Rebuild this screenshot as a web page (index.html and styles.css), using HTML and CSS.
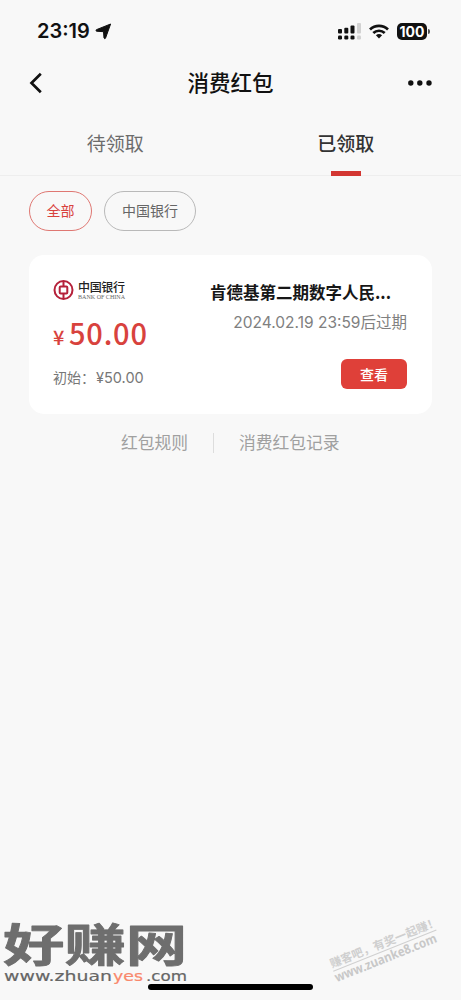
FILE: index.html
```html
<!DOCTYPE html>
<html lang="zh-CN">
<head>
<meta charset="utf-8">
<title>消费红包</title>
<link rel="stylesheet" href="styles.css">
</head>
<body>
<div class="screen">
  <header class="status">
    <span class="time">23:19</span>
    <svg class="location" width="17" height="17" viewBox="0 0 17 17"><path d="M15.600 1 10.500 15.200q-.9 1.100-1.500-.2L8.500 8.700 1.600 8.200Q.3 7.600 1.400 6.700Z" stroke="#111" stroke-linejoin="round"/></svg>
    <svg class="signal" width="24" height="17" viewBox="0 0 24 17">
      <g><rect x="1" y="6" width="4" height="4.500" rx="1"/><rect x="7.300" y="4.700" width="4" height="5.800" rx="1"/><rect x="13.500" y="2.500" width="4" height="8" rx="1"/><rect x="1" y="12.500" width="4" height="4" rx="1.300"/><rect x="7.300" y="12.500" width="4" height="4" rx="1.300"/><rect x="13.500" y="12.500" width="4" height="4" rx="1.300"/></g>
      <g class="faint"><rect x="20" y="0" width="4" height="10.500" rx="1"/><rect x="20" y="12.500" width="4" height="4" rx="1.300"/></g>
    </svg>
    <svg class="wifi" width="20" height="15" viewBox="0 0 20 15"><g fill="none" stroke="#111" stroke-width="2.700"><path d="M1 5.500a13 13 0 0 1 18 0"/><path d="M4.300 9a8.300 8.300 0 0 1 11.400 0"/></g><path d="M6.900 11.300a4.600 4.600 0 0 1 6.200 0L10 14.600Z"/></svg>
    <span class="battery">100</span><span class="battery-tip"></span>
  </header>
  <nav class="nav">
    <svg width="14" height="22" viewBox="0 0 14 22"><path d="M11.800 1.800 2.500 11l9.300 9.200" fill="none" stroke="#111" stroke-width="2.700"/></svg>
    <h1>消费红包</h1>
    <svg width="24" height="6" viewBox="0 0 24 6"><circle cx="2.800" cy="3" r="2.700"/><circle cx="11.800" cy="3" r="2.700"/><circle cx="21" cy="3" r="2.700"/></svg>
  </nav>
  <div class="tabs">
    <div class="tab">待领取</div>
    <div class="tab active">已领取</div>
  </div>
  <div class="chips">
    <span class="chip selected">全部</span>
    <span class="chip bank">中国银行</span>
  </div>
  <main class="card">
    <section class="value">
      <svg class="logo" width="74" height="22" viewBox="0 0 74 22">
        <g fill="none" stroke="#b5213a" stroke-width="2"><circle cx="10.500" cy="11" r="9"/><rect x="6.700" y="7.500" width="7.600" height="7" rx="1"/><path d="M10.500 2v5.500M10.500 14.500V20"/></g>
        <text class="brush" x="25" y="13" textLength="47">中国银行</text>
        <text class="english" x="25" y="20" textLength="47" lengthAdjust="spacingAndGlyphs">BANK OF CHINA</text>
      </svg>
      <div class="amount"><span class="yen">¥</span><span>50.00</span></div>
      <div class="initial"><span>初始：</span><span class="initial-num">¥50.00</span></div>
    </section>
    <section class="detail">
      <h2>肯德基第二期数字人民...</h2>
      <p class="expiry"><span>2024.02.19 23:59</span>后过期</p>
      <button class="view">查看</button>
    </section>
  </main>
  <footer class="links"><span>红包规则</span><i></i><span>消费红包记录</span></footer>
  <svg class="site-mark" width="192" height="82" viewBox="0 0 192 82">
    <text class="site-name" transform="translate(3 58) scale(1.330 1)" x="0" y="0" textLength="138.500" lengthAdjust="spacingAndGlyphs">好赚网</text>
    <g class="site-url">
      <text x="4" y="77" textLength="108" lengthAdjust="spacingAndGlyphs">www.zhuan</text>
      <text class="orange" x="113" y="77" textLength="30" lengthAdjust="spacingAndGlyphs">yes</text>
      <text x="146" y="77" textLength="41" lengthAdjust="spacingAndGlyphs">.com</text>
    </g>
  </svg>
  <svg class="corner-mark" width="131" height="90" viewBox="0 0 131 90">
    <g transform="translate(4 62) rotate(-21.800)">
      <text class="slogan" x="0" y="0" textLength="116">赚客吧，有奖一起赚！</text>
      <path d="M0 3.500H111" stroke="#d0d0d0"/>
      <text class="corner-url" x="-1" y="15" textLength="109" lengthAdjust="spacingAndGlyphs">www.zuanke8.com</text>
    </g>
  </svg>
  <div class="home"></div>
</div>
</body>
</html>
```
FILE: styles.css
```css
* { box-sizing: border-box; }
body { margin: 0; background: #f8f8f8; font-family: Inter, "Noto Sans CJK SC", sans-serif; }
.screen { position: relative; width: 461px; height: 1000px; overflow: hidden; background: #f8f8f8; }
svg { display: block; flex: none; fill: #111; }
.status { display: flex; align-items: center; height: 62px; padding: 0 31px 0 37px; }
.time { width: 54px; font-size: 20px; font-weight: 600; color: #111; white-space: nowrap; }
.location { margin-left: 4px; }
.signal { margin-left: 225px; }
.signal .faint { fill: #d2d2d2; }
.wifi { margin-left: 8px; }
.battery { flex: none; width: 30px; height: 17px; margin-left: 8px; border-radius: 5px; background: #111; color: #fff; font-size: 14px; font-weight: 700; line-height: 17px; text-align: center; }
.battery-tip { flex: none; width: 2px; height: 5px; margin-left: 1px; border-radius: 0 2px 2px 0; background: #555; }
.nav { display: flex; align-items: center; justify-content: space-between; height: 42px; padding: 0 29px; }
.nav h1 { margin: 0 0 0 10px; font-size: 21.5px; line-height: 42px; font-weight: 500; color: #111; }
.tabs { display: flex; height: 72px; border-bottom: 1px solid #eee; }
.tab { position: relative; flex: 1; font-size: 19px; line-height: 82px; text-align: center; color: #6c6c6c; }
.tab.active { color: #333; font-weight: 500; }
.tab.active::after { content: ""; position: absolute; left: 100px; bottom: -1px; width: 30px; height: 5px; background: #d33632; }
.chips { display: flex; gap: 12px; padding: 15px 29px 0; }
.chip { width: 63px; height: 40px; border: 1px solid #b9b9b9; border-radius: 20px; font-size: 14px; line-height: 37px; text-align: center; color: #666; }
.chip.bank { width: 92px; }
.chip.selected { color: #d8423d; border-color: #df7772; }
.card { display: flex; width: 403px; height: 159px; margin: 24px 0 0 29px; border-radius: 15px; background: #fff; }
.value { width: 165px; padding: 24px 0 0 24px; }
.logo .brush { font: 500 12px "Noto Sans CJK SC", sans-serif; fill: #222; }
.logo .english { font: 6px "Liberation Serif", serif; fill: #666; }
.amount { display: flex; align-items: baseline; gap: 5px; height: 42px; margin-top: 10px; color: #d8423d; font: 500 29px/42px "Noto Sans CJK SC", sans-serif; letter-spacing: .8px; }
.yen { width: 11px; font-size: 20px; letter-spacing: 0; }
.initial { display: flex; margin-top: 15px; color: #777; font-size: 14px; line-height: 20px; }
.initial-num { margin-left: 1px; font-size: 14.5px; }
.detail { display: flex; flex-direction: column; align-items: flex-end; width: 213px; padding-top: 24px; }
.detail h2 { align-self: flex-start; margin: 0 0 0 16px; font: 700 16.5px/26px "Noto Sans CJK SC", sans-serif; color: #171717; white-space: nowrap; }
.expiry { margin: 6px 0 0; color: #808080; font-size: 15.5px; line-height: 24px; white-space: nowrap; }
.view { width: 66px; height: 30px; margin: 24px 0 0; padding: 0; border: 0; border-radius: 6px; background: #df4039; color: #fff; font: 500 14px/28px "Noto Sans CJK SC", sans-serif; }
.links { display: flex; align-items: center; height: 24px; margin-top: 17px; padding-left: 121px; color: #a0a0a0; font-size: 16.75px; line-height: 24px; }
.links i { width: 1px; height: 20px; margin: 0 25px; background: #ddd; }
.site-mark { position: absolute; left: 0; top: 904px; }
.site-name { font: 700 45px "Noto Sans CJK SC", sans-serif; fill: #6e6e6e; stroke: #6e6e6e; stroke-width: .8px; stroke-linejoin: round; }
.site-url { font: 14.5px "DejaVu Sans", sans-serif; fill: #666; stroke: #666; stroke-width: .2px; }
.site-url .orange { fill: #f9886c; stroke: #f9886c; }
.corner-mark { position: absolute; left: 328px; top: 906px; }
.slogan { font: 700 11.5px "Noto Sans CJK SC", sans-serif; fill: #cfcfcf; }
.corner-url { font: 700 13px "Noto Sans", sans-serif; fill: #c8c8c8; }
.home { position: absolute; left: 148px; top: 984px; width: 165px; height: 6px; border-radius: 3px; background: #000; }
```
